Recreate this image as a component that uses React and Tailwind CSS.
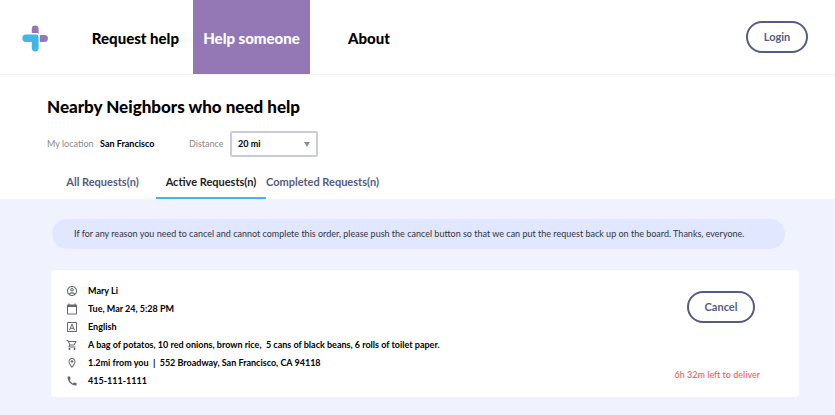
import {
  MdCalendarToday,
  MdCall,
  MdOutlineAccountCircle,
  MdOutlineFontDownload,
  MdOutlineLocationOn,
  MdOutlineShoppingCart,
} from "react-icons/md";

const details = [
  { icon: MdOutlineAccountCircle, text: "Mary Li" },
  { icon: MdCalendarToday, text: "Tue, Mar 24, 5:28 PM" },
  { icon: MdOutlineFontDownload, text: "English" },
  {
    icon: MdOutlineShoppingCart,
    text: "A bag of potatos, 10 red onions, brown rice,  5 cans of black beans, 6 rolls of toilet paper.",
  },
  {
    icon: MdOutlineLocationOn,
    text: "1.2mi from you  |  552 Broadway, San Francisco, CA 94118",
  },
  { icon: MdCall, text: "415-111-1111" },
];

function Logo() {
  return (
    <svg viewBox="0 0 26 27" className="h-[27px] w-[26px]" aria-hidden="true">
      <path d="M9.8 8V4a3.4 3.4 0 0 1 6.8 0v5.2Q16 8 14.6 8z" fill="#9478b6" />
      <path d="M17.8 10h4.6a3.5 3.5 0 0 1 0 7h-4.6z" fill="#9478b6" />
      <path
        d="M4 9.6h10.2a2.4 2.4 0 0 1 2.4 2.4v11a3.4 3.4 0 0 1-6.8 0v-6H4a3.7 3.7 0 0 1 0-7.4z"
        fill="#41b6e9"
      />
    </svg>
  );
}

function Header() {
  return (
    <header className="flex h-[75px] items-start border-b border-[#f3f3fd] pr-[27px]">
      <a href="#home" aria-label="Home" className="ml-[22px] mt-[25px]">
        <Logo />
      </a>
      <nav className="ml-6 flex text-[15px] font-black">
        <a href="#request" className="flex h-[74px] w-[121px] items-center justify-end pr-3.5 pt-0.5 whitespace-nowrap">
          Request help
        </a>
        <a href="#help" className="flex h-[74px] w-[117px] items-center justify-center bg-[#9478b6] pt-0.5 whitespace-nowrap text-white">
          Help someone
        </a>
        <a href="#about" className="flex h-[74px] w-[118px] items-center justify-center pt-0.5">
          About
        </a>
      </nav>
      <button className="ml-auto mt-[21px] h-8 w-[62px] rounded-full border-2 border-[#555c80] text-[11px] font-bold text-[#555c80]">
        Login
      </button>
    </header>
  );
}

function Tabs() {
  return (
    <div role="tablist" className="flex h-8 pl-[49px] text-[11px] font-bold whitespace-nowrap text-[#555c80]">
      <button role="tab" aria-selected="false" className="w-[107px] pb-0.5">
        All Requests(n)
      </button>
      <button role="tab" aria-selected="true" className="w-[110px] border-b-2 border-[#41b6e9] text-[#222]">
        Active Requests(n)
      </button>
      <button role="tab" aria-selected="false" className="pb-0.5">
        Completed Requests(n)
      </button>
    </div>
  );
}

export default function App() {
  return (
    <div className="flex min-h-screen flex-col bg-white font-['Lato',sans-serif] text-black">
      <Header />
      <main className="flex flex-1 flex-col">
        <h1 className="mt-5 ml-[47px] text-[17px] leading-6 font-black">
          Nearby Neighbors who need help
        </h1>
        <div className="mt-3 ml-[47px] flex h-[26px] items-center text-[9px]">
          <span className="w-[53px] text-[#888]">My location</span>
          <span className="w-[89px] font-bold">San Francisco</span>
          <label htmlFor="distance" className="w-[41px] text-[#888]">
            Distance
          </label>
          <div className="relative">
            <select
              id="distance"
              defaultValue="20"
              className="block h-[26px] w-[88px] appearance-none rounded-xs border-2 border-[#c9cbdf] bg-white pl-1.5 text-[9px] font-bold"
            >
              <option value="10">10 mi</option>
              <option value="20">20 mi</option>
            </select>
            <svg viewBox="0 0 6 5" className="pointer-events-none absolute top-[11px] right-2 h-[5px] w-1.5" aria-hidden="true">
              <path d="M0 0h6L3 5z" fill="#8c8c91" />
            </svg>
          </div>
        </div>
        <div className="mt-2.5">
          <Tabs />
        </div>
        <section className="flex-1 bg-[#f0f3fe] pt-5 pr-9 pb-[18px] pl-[51px]">
          <p className="mr-3.5 ml-px rounded-full bg-[#e1e7fe] py-2 pl-[22px] text-[9px] leading-[14px] text-[#33343f]">
            If for any reason you need to cancel and cannot complete this order, please push the cancel button so that we can put the request back up on the board. Thanks, everyone.
          </p>
          <article className="mt-[21px] flex justify-between rounded bg-white pt-3 pr-[39px] pb-[7px] pl-[15px]">
            <ul className="text-[9px] font-bold">
              {details.map(({ icon: Icon, text }) => (
                <li key={text} className="flex h-[18px] items-center gap-2.5 whitespace-pre">
                  <Icon className="size-3 text-[#66686e]" aria-hidden="true" />
                  {text}
                </li>
              ))}
            </ul>
            <div className="flex flex-col items-end justify-between pt-[9px] pb-[9px]">
              <button className="mr-[5px] h-8 w-[68px] rounded-full border-2 border-[#555c80] text-[11px] font-bold text-[#555c80]">
                Cancel
              </button>
              <p className="text-[9px] leading-3 font-medium text-[#f1605f]">6h 32m left to deliver</p>
            </div>
          </article>
        </section>
      </main>
    </div>
  );
}
